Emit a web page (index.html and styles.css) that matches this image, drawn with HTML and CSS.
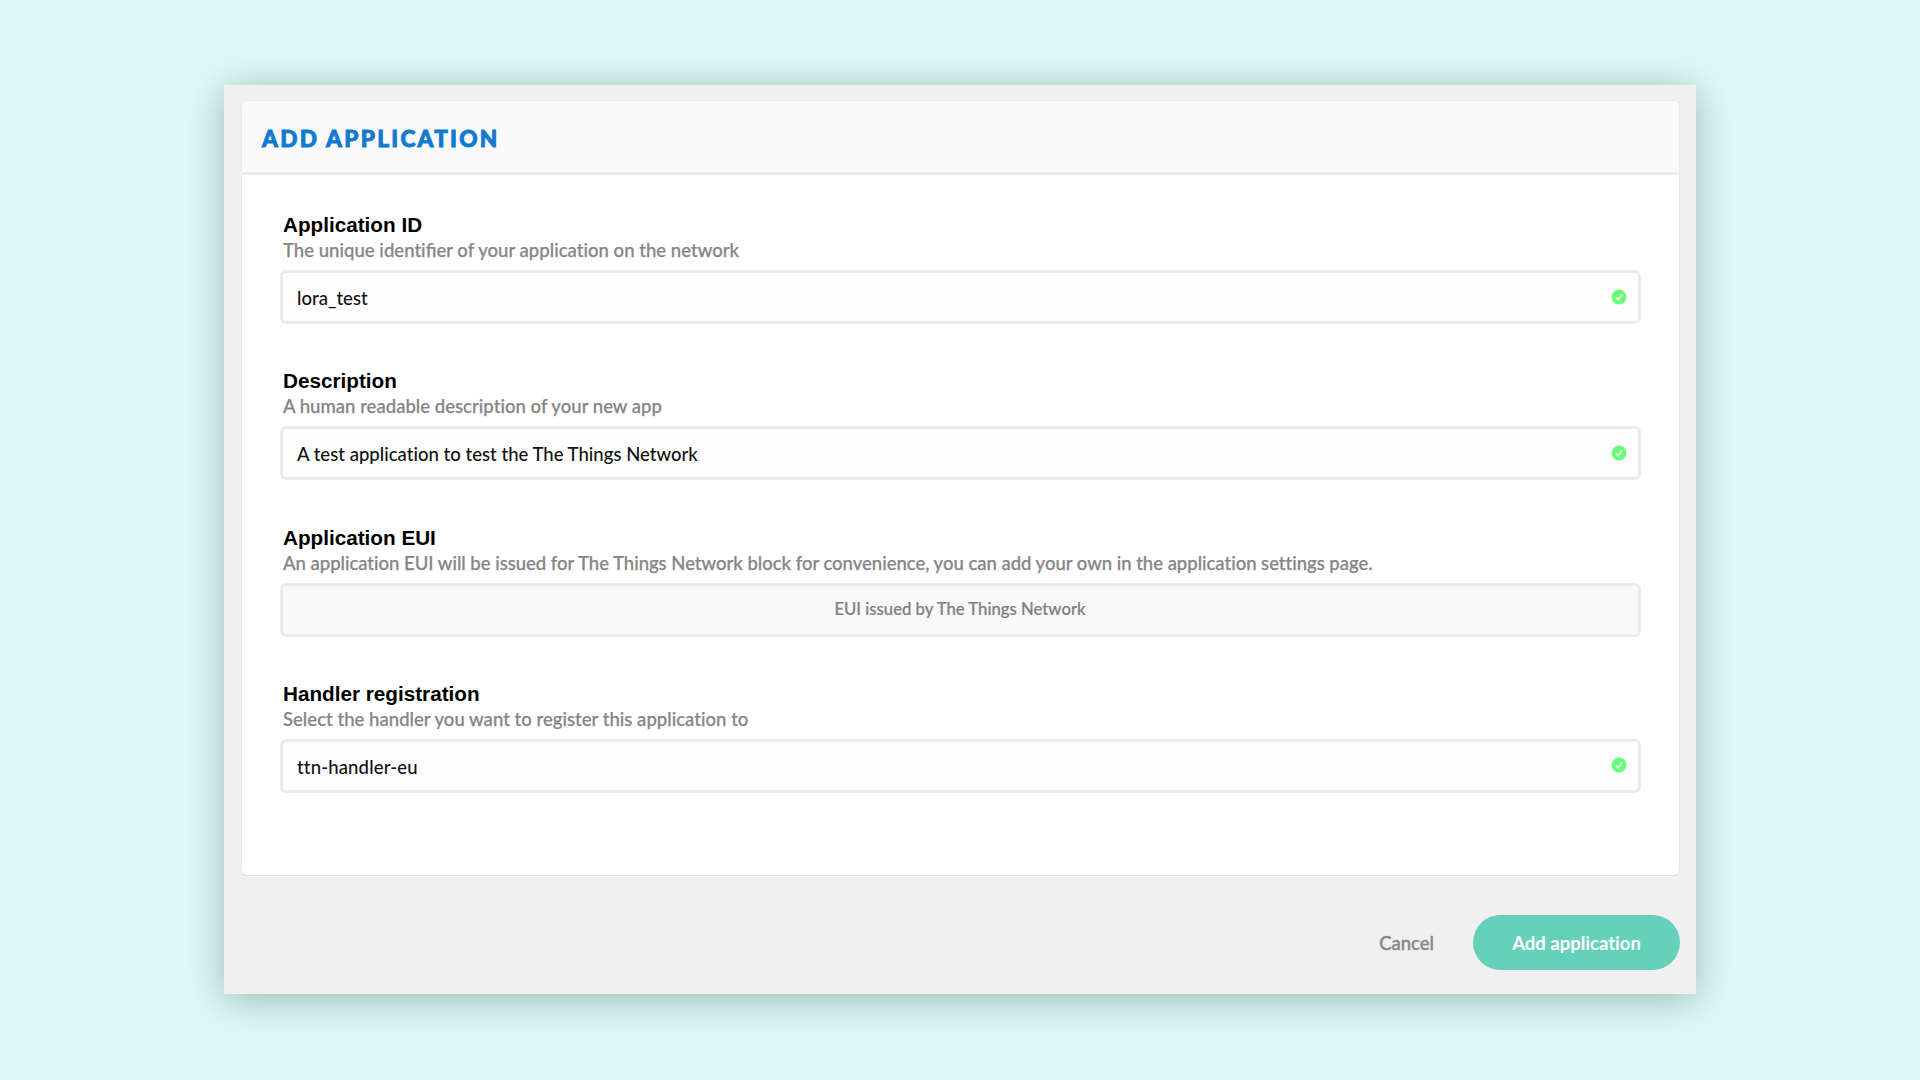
FILE: index.html
```html
<!DOCTYPE html>
<html lang="en">
<head>
<meta charset="utf-8">
<title>Add application</title>
<link rel="stylesheet" href="styles.css">
</head>
<body>
<main class="window">
  <section class="card">
    <header class="card-header"><h1 class="title">ADD APPLICATION</h1></header>
    <div class="fields">
      <div class="field">
        <div class="label">Application ID</div>
        <div class="hint">The unique identi<span class="lig">fi</span>er of your application on the network</div>
        <div class="input"><span>lora_test</span>
          <svg class="valid" viewBox="0 0 16 16"><circle cx="8" cy="8" r="7.4"/><path d="M4.7 8.4 7 10.6 11.3 5.4"/></svg></div>
      </div>
      <div class="field">
        <div class="label">Description</div>
        <div class="hint">A human readable description of your new app</div>
        <div class="input"><span>A test application to test the The Things Network</span>
          <svg class="valid" viewBox="0 0 16 16"><circle cx="8" cy="8" r="7.4"/><path d="M4.7 8.4 7 10.6 11.3 5.4"/></svg></div>
      </div>
      <div class="field">
        <div class="label">Application EUI</div>
        <div class="hint hint-long">An application EUI will be issued for The Things Network block for convenience, you can add your own in the application settings page.</div>
        <div class="input input-disabled"><span>EUI issued by The Things Network</span></div>
      </div>
      <div class="field">
        <div class="label">Handler registration</div>
        <div class="hint">Select the handler you want to register this application to</div>
        <div class="input input-handler"><span>ttn-handler-eu</span>
          <svg class="valid" viewBox="0 0 16 16"><circle cx="8" cy="8" r="7.4"/><path d="M4.7 8.4 7 10.6 11.3 5.4"/></svg></div>
      </div>
    </div>
  </section>
  <footer class="actions">
    <span class="cancel">Cancel</span>
    <div class="submit">Add application</div>
  </footer>
</main>
</body>
</html>
```
FILE: styles.css
```css
* { box-sizing: border-box; }
body {
  margin: 0;
  height: 1080px;
  overflow: hidden;
  padding: 85px 224px 86px;
  background: #ddf8f9;
  font-family: Lato, "Liberation Sans", sans-serif;
  font-variant-ligatures: none;
}
.lig { font-variant-ligatures: normal; letter-spacing: 0; }
.window {
  height: 909px;
  padding: 15px 16px 0 17px;
  background: #f0f0f0;
  box-shadow: 0 5px 36px rgba(80, 110, 90, 0.46);
}
.card {
  height: 776px;
  border: 1px solid #e8e8e8;
  border-bottom-color: #dadada;
  border-radius: 6px;
  background: #fff;
  overflow: hidden;
}
.card-header {
  display: flex;
  align-items: center;
  height: 74px;
  padding: 4px 20px 0;
  background: #fafafa;
  border-bottom: 3px solid #ebebeb;
}
.title {
  margin: 0;
  font-size: 22.6px;
  font-weight: 900;
  line-height: 30px;
  letter-spacing: 2.3px;
  color: #1079d0;
  -webkit-text-stroke: 0.9px #1079d0;
}
.fields {
  display: flex;
  flex-direction: column;
  gap: 46.33px;
  padding: 39px 38px 0 38px;
}
.label, .hint { height: 24px; line-height: 24px; padding-left: 3px; white-space: nowrap; }
.label {
  font-family: "Liberation Sans", Arial, sans-serif;
  font-size: 20.7px;
  font-weight: 700;
  line-height: 22px;
  color: #000;
}
.hint {
  font-size: 18.5px;
  font-weight: 500;
  color: #868686;
  letter-spacing: 0.03px;
  -webkit-text-stroke: 0.25px #868686;
}
.hint-long { letter-spacing: -0.018px; }
.input {
  display: flex;
  align-items: center;
  justify-content: space-between;
  height: 54px;
  margin-top: 8px;
  padding: 2px 11px 0 14px;
  border: 3px solid #ebebeb;
  border-radius: 6px;
  background: #fdfdfd;
  color: #111;
  font-size: 18.5px;
  font-weight: 500;
  letter-spacing: 0.02px;
}
.input-handler { letter-spacing: 0.15px; }
.input-disabled {
  justify-content: center;
  padding: 0 1px 1px 0;
  background: #f9f9f9;
  color: #808080;
  font-size: 16.7px;
  letter-spacing: 0;
  -webkit-text-stroke: 0.2px #808080;
}
.valid { width: 16px; height: 16px; margin-top: -3px; }
.valid circle { fill: #69fc78; }
.valid path { fill: none; stroke: #dcffe0; stroke-width: 2; }
.actions {
  display: flex;
  align-items: center;
  justify-content: flex-end;
  gap: 39px;
  margin-top: 39px;
  font-size: 18.5px;
  font-weight: 500;
}
.cancel { color: #888; -webkit-text-stroke: 0.4px #888; }
.submit {
  display: flex;
  align-items: center;
  justify-content: center;
  width: 207px;
  height: 55px;
  border-radius: 28px;
  background: #66d1bb;
  color: #fff;
  font-weight: 700;
}
```
